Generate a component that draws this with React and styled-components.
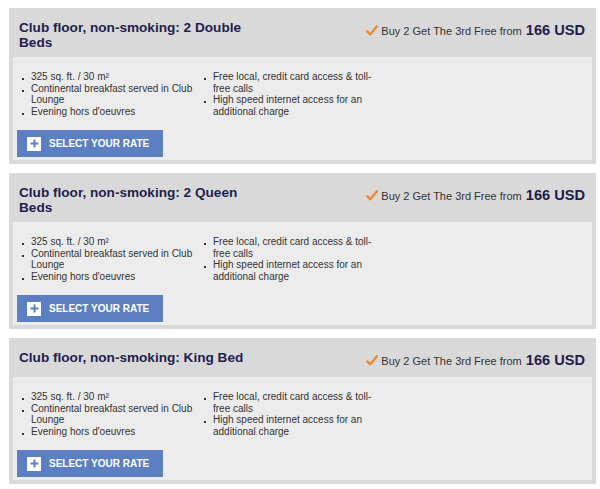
import React from "react";
import styled, { createGlobalStyle } from "styled-components";

const GlobalStyle = createGlobalStyle`
  html, body {
    margin: 0;
    padding: 0;
    background: #ffffff;
    font-family: "Liberation Sans", Arial, sans-serif;
  }
`;

const rooms = [
  { title: "Club floor, non-smoking: 2 Double Beds" },
  { title: "Club floor, non-smoking: 2 Queen Beds" },
  { title: "Club floor, non-smoking: King Bed" },
];

const leftFeatures = [
  "325 sq. ft. / 30 m²",
  "Continental breakfast served in Club Lounge",
  "Evening hors d'oeuvres",
];

const rightFeatures = [
  "Free local, credit card access & toll-free calls",
  "High speed internet access for an additional charge",
];

const Check = () => (
  <svg width="12" height="11" viewBox="0 0 12 11">
    <path
      d="M1.3 6.4 L4.3 9.3 L10.9 1.3"
      fill="none"
      stroke="#f0892a"
      strokeWidth="2.3"
      strokeLinecap="round"
      strokeLinejoin="round"
    />
  </svg>
);

const PlusIcon = () => (
  <PlusBox>
    <svg width="9" height="9" viewBox="0 0 9 9">
      <path d="M4.5 0.5 V8.5 M0.5 4.5 H8.5" stroke="#5b7fc1" strokeWidth="2" />
    </svg>
  </PlusBox>
);

const RoomCard = ({ title }) => {
  return (
    <Card>
      <Header>
        <Title>{title}</Title>
        <Offer>
          <Check />
          <OfferText>Buy 2 Get The 3rd Free from</OfferText>
          <Price>166 USD</Price>
        </Offer>
      </Header>
      <Body>
        <Features>
          <FeatureList>
            {leftFeatures.map((f) => (
              <Feature key={f}>{f}</Feature>
            ))}
          </FeatureList>
          <FeatureList>
            {rightFeatures.map((f) => (
              <Feature key={f}>{f}</Feature>
            ))}
          </FeatureList>
        </Features>
        <SelectButton type="button">
          <PlusIcon />
          SELECT YOUR RATE
        </SelectButton>
      </Body>
    </Card>
  );
};

const App = () => {
  return (
    <>
      <GlobalStyle />
      <Page>
        {rooms.map((r) => (
          <RoomCard key={r.title} title={r.title} />
        ))}
      </Page>
    </>
  );
};

const Page = styled.div`
  padding: 8px 4px 0 9px;
  display: flex;
  flex-direction: column;
  gap: 9px;
`;

const Card = styled.section`
  background: #d9d9d9;
  padding: 0 4px 4px 4px;
  display: flex;
  flex-direction: column;
`;

const Header = styled.div`
  display: flex;
  justify-content: space-between;
  align-items: flex-start;
  padding: 12px 7px 7px 6px;
`;

const Title = styled.h3`
  margin: 0;
  max-width: 240px;
  font-size: 13.6px;
  line-height: 15px;
  font-weight: bold;
  color: #221d4f;
`;

const Offer = styled.div`
  display: flex;
  align-items: center;
  height: 20px;
`;

const OfferText = styled.span`
  font-size: 11px;
  color: #333333;
  margin: 2px 0 0 3px;
`;

const Price = styled.span`
  font-size: 14.6px;
  font-weight: bold;
  color: #1f1b4d;
  margin-left: 4px;
`;

const Body = styled.div`
  background: #ececec;
  padding: 14px 4px 3px 4px;
  display: flex;
  flex-direction: column;
  align-items: flex-start;
`;

const Features = styled.div`
  display: flex;
  padding-left: 5px;
`;

const FeatureList = styled.ul`
  list-style: none;
  margin: 0;
  padding: 0;
  width: 182px;
`;

const Feature = styled.li`
  display: flex;
  align-items: flex-start;
  font-size: 10px;
  line-height: 11.5px;
  color: #333333;
  padding-right: 8px;

  &::before {
    content: "";
    flex: none;
    width: 2px;
    height: 2px;
    background: #333333;
    margin: 7px 7px 0 0;
  }
`;

const SelectButton = styled.button`
  margin-top: 13px;
  width: 146px;
  height: 27px;
  border: none;
  background: #5b7fc1;
  color: #ffffff;
  display: flex;
  align-items: center;
  gap: 8px;
  padding: 0 0 0 10px;
  font-family: "Liberation Sans", Arial, sans-serif;
  font-size: 10px;
  font-weight: bold;
  cursor: pointer;
`;

const PlusBox = styled.span`
  width: 14px;
  height: 14px;
  background: #ffffff;
  display: flex;
  align-items: center;
  justify-content: center;
`;

export default App;
